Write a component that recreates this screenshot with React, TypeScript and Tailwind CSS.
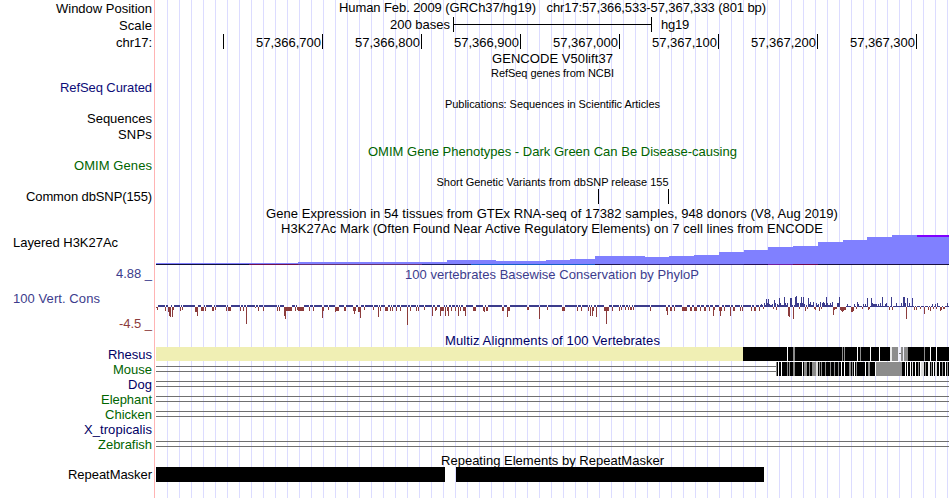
import { useLayoutEffect, useRef, useState, type ReactNode } from "react";

type TextProps = { text: string; width: number; className?: string };

/** One line of text whose letter spacing is adjusted to a measured width. */
function FitText({ text, width, className = "text-[13px] leading-[15px]" }: TextProps) {
  const ref = useRef<HTMLSpanElement>(null);
  const [spacing, setSpacing] = useState(0);
  useLayoutEffect(() => {
    if (ref.current) {
      ref.current.style.letterSpacing = "0px";
      const natural = ref.current.getBoundingClientRect().width;
      const next = (width - natural) / text.length;
      ref.current.style.letterSpacing = `${next}px`;
      setSpacing(next);
    }
  }, [text, width]);
  return (
    <span ref={ref} className={`inline-block whitespace-pre ${className}`} style={{ letterSpacing: `${spacing}px` }}>
      {text}
    </span>
  );
}

const SMALL = "text-[11px] leading-[12px]";

type RowProps = { className: string; label?: ReactNode; children?: ReactNode };

function Row({ className, label, children }: RowProps) {
  return (
    <div className={`flex shrink-0 ${className}`}>
      <div className="flex w-[154px] shrink-0 flex-col items-end pr-[2px]">{label}</div>
      <div className="w-[793px] shrink-0 ml-[2px]">{children}</div>
    </div>
  );
}

function Title({ className = "", children }: { className?: string; children: ReactNode }) {
  return <div className={`flex justify-center ${className}`}>{children}</div>;
}

const START = 156;

const positions: [string, string][] = [
  ["", "w-[68px]"],
  ["57,366,700", "w-[99px]"],
  ["57,366,800", "w-[99px]"],
  ["57,366,900", "w-[99px]"],
  ["57,367,000", "w-[99px]"],
  ["57,367,100", "w-[99px]"],
  ["57,367,200", "w-[99px]"],
  ["57,367,300", "w-[99px]"],
];

// Step start and top of the signal
const h3k27: [number, number][] = [
  [156, 263], [298, 262], [447, 260], [496, 261], [546, 260], [570, 259], [595, 256], [645, 257],
  [669, 256], [694, 255], [719, 252], [744, 250], [768, 247], [793, 246], [818, 242], [843, 240],
  [867, 237], [892, 235], [949, 235],
];

const h3k27Base: [number, string][] = [
  [156, "#101038"], [249, "#70104c"], [298, "#683070"], [422, "#202060"], [471, "#1760c8"],
  [595, "#201850"], [620, "#342878"], [744, "#281058"], [768, "#7020a0"], [793, "#700850"],
  [818, "#181040"], [949, ""],
];

function Histogram() {
  return (
    <svg width="793" height="32" viewBox="156 235 793 32" shapeRendering="crispEdges" className="block">
      {h3k27.slice(0, -1).map(([x, y], i) => (
        <rect key={x} x={x} y={y} width={h3k27[i + 1][0] - x} height={264 - y} fill="#8080ff" />
      ))}
      <rect x="917" y="235" width="32" height="2" fill="#8000ff" />
      {h3k27Base.slice(0, -1).map(([x, c], i) => (
        <rect key={x} x={x} y="264" width={h3k27Base[i + 1][0] - x} height="1" fill={c} />
      ))}
    </svg>
  );
}

// Negative scores: x, height, run length
const negative: [number, number, number?][] = [
  [156, 1], [157, 3], [165, 4], [168, 5], [169, 9], [170, 10], [172, 10], [173, 3], [180, 4], [182, 3],
  [195, 5, 2], [197, 9], [201, 4, 3], [205, 4], [212, 4, 2], [215, 3], [226, 4], [228, 4, 3], [240, 4],
  [243, 4], [246, 17], [255, 1], [258, 4], [263, 4], [277, 4], [279, 4], [284, 9], [285, 12], [286, 4, 6],
  [295, 4], [297, 3], [298, 4, 6], [309, 4], [313, 4], [322, 11], [323, 4], [328, 3], [335, 5], [336, 4, 3],
  [344, 4, 2], [353, 4], [354, 7], [355, 4], [358, 5, 2], [360, 11], [364, 3], [373, 3], [378, 10],
  [380, 4], [385, 4, 3], [390, 4], [392, 4], [396, 4], [400, 4], [407, 18], [410, 4], [416, 4], [418, 4],
  [424, 3], [432, 9], [435, 4], [436, 3], [440, 9], [441, 4, 3], [445, 9], [447, 4], [448, 9], [451, 4],
  [455, 4], [458, 9], [460, 4], [463, 4, 2], [465, 9], [473, 4, 3], [483, 4], [484, 5], [486, 4, 2],
  [502, 4, 2], [507, 10], [508, 4, 2], [527, 3, 2], [539, 12], [547, 3], [562, 4, 3], [577, 4], [581, 4],
  [588, 4], [590, 9], [592, 9], [593, 4], [596, 10], [604, 4, 2], [606, 17], [607, 4, 2], [612, 4],
  [619, 4], [621, 3], [625, 3], [628, 3], [630, 3, 2], [633, 3], [650, 4], [666, 4], [667, 8], [670, 4, 2],
  [674, 4], [682, 4, 5], [690, 4, 2], [694, 4, 3], [700, 4], [704, 4, 2], [709, 4], [713, 9], [714, 3],
  [719, 4], [720, 9], [721, 4], [724, 4], [730, 9], [733, 4, 2], [740, 4], [742, 4], [751, 4], [754, 4, 2],
  [759, 4], [763, 2], [773, 2], [776, 3], [788, 9], [789, 10], [793, 12], [799, 2], [805, 4], [807, 2],
  [814, 2], [815, 3], [819, 4], [821, 2], [833, 8], [834, 3], [835, 2, 2], [840, 3], [841, 4], [842, 5],
  [843, 4], [844, 3, 2], [851, 5, 2], [853, 4], [856, 2], [862, 2], [868, 3], [869, 2], [889, 3], [892, 3],
  [906, 12], [914, 3], [916, 3], [920, 2], [924, 7], [928, 3], [930, 4], [933, 2], [936, 2], [940, 4],
  [941, 3], [943, 2, 2],
];

const positive: [number, number][] = [
  [761, 3], [764, 4], [766, 8], [767, 4], [768, 8], [769, 3], [772, 3], [774, 7], [775, 4], [777, 3],
  [779, 9], [780, 4], [784, 10], [785, 4], [787, 4], [790, 9], [791, 9], [795, 10], [796, 11], [797, 4],
  [798, 4], [800, 4], [801, 10], [802, 4], [803, 10], [804, 3], [808, 9], [809, 3], [810, 5], [813, 5],
  [816, 4], [818, 3], [820, 5], [822, 4], [823, 5], [824, 4], [826, 10], [827, 4], [830, 4], [832, 5],
  [837, 4], [838, 4], [839, 10], [847, 3], [854, 3], [857, 5], [858, 3], [863, 3], [865, 3], [867, 9],
  [871, 9], [872, 4], [873, 3], [874, 3], [875, 3], [876, 3], [878, 3], [880, 4], [882, 10], [885, 3],
  [886, 4], [891, 10], [896, 4], [901, 4], [903, 10], [904, 10], [905, 4], [907, 9], [909, 4], [912, 9],
  [932, 3], [935, 3], [937, 4], [947, 4],
];

const negativeColumns = new Set(
  negative.flatMap(([x, , run = 1]) => Array.from({ length: run }, (_, i) => x + i)),
);

function Conservation() {
  const columns = Array.from({ length: 793 }, (_, i) => START + i).filter((x) => !negativeColumns.has(x));
  return (
    <svg width="793" height="51" viewBox="156 282 793 51" shapeRendering="crispEdges" className="block">
      {columns.map((x) => {
        const h = x < 846 ? 2 : 1;
        return <rect key={x} x={x} y={307 - h} width="1" height={h} fill="#3c3c8c" />;
      })}
      {positive.map(([x, h]) => (
        <rect key={x} x={x} y={307 - h} width="1" height={h} fill="#3c3c8c" />
      ))}
      {negative.map(([x, h, run = 1]) => (
        <rect key={x} x={x} y="307" width={run} height={h} fill="#8c3c3c" />
      ))}
    </svg>
  );
}

// Alignment shades over the black bars: x, width, colour
const rhesus: [number, number, string][] = [
  [787, 1, "#fff"], [793, 2, "#8c8c8c"], [842, 1, "#8c8c8c"], [844, 1, "#8c8c8c"], [857, 1, "#fff"],
  [860, 1, "#8c8c8c"], [870, 1, "#fff"], [879, 1, "#fff"], [890, 2, "#e6e6e6"], [892, 6, "#8c8c8c"],
  [898, 6, "#f0f0fa"], [901, 2, "#8c8c8c"], [904, 4, "#8c8c8c"], [924, 1, "#8c8c8c"], [930, 1, "#fff"],
  [936, 1, "#fff"],
];

const mouse: [number, number, string][] = [
  [776, 1, "#8c8c8c"], [778, 1, "#fff"], [781, 1, "#fff"], [787, 1, "#8c8c8c"], [789, 1, "#8c8c8c"],
  [793, 2, "#8c8c8c"], [802, 1, "#fff"], [804, 3, "#8c8c8c"], [809, 1, "#8c8c8c"], [812, 4, "#8c8c8c"],
  [816, 2, "#dcdcdc"], [819, 1, "#8c8c8c"], [821, 1, "#8c8c8c"], [825, 1, "#8c8c8c"], [830, 1, "#8c8c8c"],
  [834, 1, "#8c8c8c"], [838, 1, "#8c8c8c"], [841, 1, "#fff"], [844, 1, "#fff"], [849, 2, "#8c8c8c"],
  [852, 1, "#8c8c8c"], [854, 1, "#fff"], [856, 1, "#8c8c8c"], [865, 1, "#fff"], [868, 2, "#8c8c8c"],
  [875, 1, "#fff"], [876, 26, "#8c8c8c"], [905, 1, "#fff"], [907, 1, "#fff"], [910, 1, "#fff"],
  [912, 1, "#dcdcdc"], [915, 1, "#fff"], [918, 1, "#8c8c8c"], [920, 1, "#fff"], [921, 3, "#dcdcdc"],
  [925, 1, "#8c8c8c"], [928, 2, "#f0f0f0"], [931, 1, "#8c8c8c"], [933, 1, "#fff"], [935, 2, "#dcdcdc"],
  [939, 1, "#fff"], [942, 1, "#8c8c8c"], [945, 1, "#fff"], [947, 1, "#8c8c8c"],
];

function Alignment({ from, marks, dash }: { from: number; marks: [number, number, string][]; dash?: boolean }) {
  return (
    <svg
      width={949 - from}
      height="14"
      viewBox={`${from} 0 ${949 - from} 14`}
      shapeRendering="crispEdges"
      className="block shrink-0"
    >
      <rect x={from} width={949 - from} height="14" fill="#000" />
      {marks.map(([x, w, c]) => (
        <rect key={x} x={x} width={w} height="14" fill={c} />
      ))}
      {dash && <rect x="899" y="6" width="2" height="1" fill="#707070" />}
    </svg>
  );
}

function Gap() {
  return <div className="mt-[4px] h-[6px] grow border-y border-[#707070]" />;
}

const NAVY = "text-[#0c0c78]";
const SPECIES_NAVY = "text-[#000064]";
const SPECIES_GREEN = "text-[#006400]";

export default function App() {
  return (
    <div className="h-[498px] w-[950px] overflow-hidden bg-white font-['Liberation_Sans',Arial,sans-serif] text-[13px] leading-[15px] text-black">
      <div className="flex h-[498px] w-[949px] flex-col bg-[linear-gradient(to_right,transparent_154px,#ffb4b4_154px,#ffb4b4_155px,#fff0_155px),linear-gradient(to_right,#fff_156px,transparent_156px),repeating-linear-gradient(to_right,transparent_0px,transparent_11px,#dcdcff_11px,#dcdcff_12px)]">
        <Row className="h-[17px]" label={<div className="mt-px"><FitText text="Window Position" width={96} /></div>}>
          <Title>
            <FitText text="Human Feb. 2009 (GRCh37/hg19)   chr17:57,366,533-57,367,333 (801 bp)" width={427} />
          </Title>
        </Row>
        <Row className="h-[17px]" label={<div className="mt-px"><FitText text="Scale" width={33} /></div>}>
          <div className="flex">
            <div className="flex w-[297px] justify-end pr-[3px]"><FitText text="200 bases" width={60} /></div>
            <div className="flex h-[15px] w-[199px] flex-col border-x border-black"><div className="mt-[7px] h-px bg-black" /></div>
            <div className="pl-[9px]"><FitText text="hg19" width={28} /></div>
          </div>
        </Row>
        <Row className="h-[16px]" label={<div className="mt-px"><FitText text="chr17:" width={36} /></div>}>
          <div className="flex">
            {positions.map(([text, w], i) => (
              <div key={i} className={`flex h-[15px] justify-end border-r border-black pr-px pt-px ${w}`}>
                {text && <FitText text={text} width={65} />}
              </div>
            ))}
          </div>
        </Row>
        <Row className="h-[16px]"><Title className="pt-px"><FitText text="GENCODE V50lift37" width={121} /></Title></Row>
        <Row className="h-[14px]"><Title className="pt-px"><FitText text="RefSeq genes from NCBI" width={123} className={SMALL} /></Title></Row>
        <Row className="h-[17px]" label={<div className={NAVY}><FitText text="RefSeq Curated" width={92} /></div>} />
        <Row className="h-[14px]">
          <Title className="pt-px"><FitText text="Publications: Sequences in Scientific Articles" width={215} className={SMALL} /></Title>
        </Row>
        <Row className="h-[16px]" label={<FitText text="Sequences" width={65} />} />
        <Row className="h-[17px]" label={<FitText text="SNPs" width={34} />} />
        <Row className="h-[14px]">
          <Title className={SPECIES_GREEN}>
            <FitText text="OMIM Gene Phenotypes - Dark Green Can Be Disease-causing" width={369} />
          </Title>
        </Row>
        <Row className="h-[17px]" label={<div className={SPECIES_GREEN}><FitText text="OMIM Genes" width={78} /></div>} />
        <Row className="h-[14px]">
          <Title className="pt-px"><FitText text="Short Genetic Variants from dbSNP release 155" width={232} className={SMALL} /></Title>
        </Row>
        <Row className="h-[17px]" label={<FitText text="Common dbSNP(155)" width={126} />}>
          <div className="flex h-[15px]">
            <div className="w-[443px] border-r border-black" />
            <div className="w-[70px] border-r border-black" />
          </div>
        </Row>
        <Row className="h-[15px]">
          <Title className="pr-px">
            <FitText text="Gene Expression in 54 tissues from GTEx RNA-seq of 17382 samples, 948 donors (V8, Aug 2019)" width={572} />
          </Title>
        </Row>
        <Row className="h-[14px]">
          <Title className="pr-px">
            <FitText text="H3K27Ac Mark (Often Found Near Active Regulatory Elements) on 7 cell lines from ENCODE" width={542} />
          </Title>
        </Row>
        <Row className="h-[32px]" label={<div className="w-full pl-[13px]"><FitText text="Layered H3K27Ac" width={105} /></div>}>
          <Histogram />
        </Row>
        <Row className="h-[15px]" label={<div className="-mt-px text-[#3c3c8c]"><FitText text="4.88 _" width={36} /></div>}>
          <Title className="pr-px text-[#3c3c8c]">
            <FitText text="100 vertebrates Basewise Conservation by PhyloP" width={294} />
          </Title>
        </Row>
        <Row
          className="h-[51px]"
          label={
            <>
              <div className="mt-[9px] w-full pl-[13px] text-[#3c3c8c]"><FitText text="100 Vert. Cons" width={87} /></div>
              <div className="mt-[10px] text-[#8c3c3c]"><FitText text="-4.5 _" width={33} /></div>
            </>
          }
        >
          <Conservation />
        </Row>
        <Row className="h-[14px]">
          <Title className={SPECIES_NAVY}><FitText text="Multiz Alignments of 100 Vertebrates" width={215} /></Title>
        </Row>
        <Row className="h-[15px]" label={<div className={SPECIES_NAVY}><FitText text="Rhesus" width={44} /></div>}>
          <div className="flex h-[14px]">
            <div className="grow bg-[#f0efb4]" />
            <Alignment from={743} marks={rhesus} dash />
          </div>
        </Row>
        <Row className="h-[15px]" label={<div className={SPECIES_GREEN}><FitText text="Mouse" width={39} /></div>}>
          <div className="flex h-[14px]">
            <Gap />
            <Alignment from={776} marks={mouse} />
          </div>
        </Row>
        <Row className="h-[15px]" label={<div className={SPECIES_NAVY}><FitText text="Dog" width={24} /></div>}>
          <div className="flex"><Gap /></div>
        </Row>
        <Row className="h-[15px]" label={<div className={SPECIES_GREEN}><FitText text="Elephant" width={51} /></div>}>
          <div className="flex"><Gap /></div>
        </Row>
        <Row className="h-[15px]" label={<div className={SPECIES_GREEN}><FitText text="Chicken" width={47} /></div>}>
          <div className="flex"><Gap /></div>
        </Row>
        <Row className="h-[15px]" label={<div className={SPECIES_NAVY}><FitText text="X_tropicalis" width={68} /></div>} />
        <Row className="h-[15px]" label={<div className={SPECIES_GREEN}><FitText text="Zebrafish" width={54} /></div>}>
          <div className="flex"><Gap /></div>
        </Row>
        <Row className="h-[15px]">
          <Title className="pt-px"><FitText text="Repeating Elements by RepeatMasker" width={223} /></Title>
        </Row>
        <Row className="h-[31px]" label={<FitText text="RepeatMasker" width={84} />}>
          <div className="relative flex h-[15px] gap-[11px]">
            <div className="w-[289px] bg-black" />
            <div className="w-[308px] bg-black" />
          </div>
        </Row>
      </div>
    </div>
  );
}
